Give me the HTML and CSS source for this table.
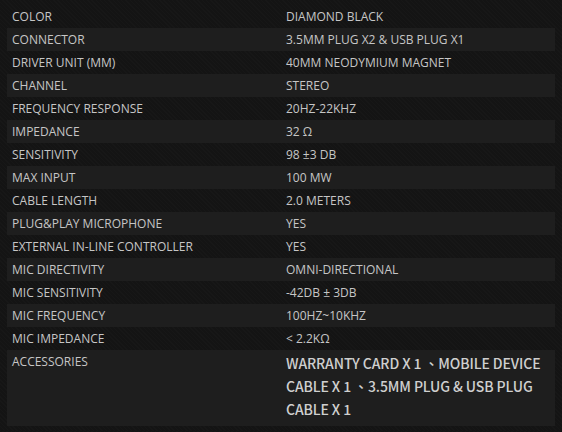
FILE: index.html
```html
<!DOCTYPE html>
<html lang="en">
<head>
  <meta charset="UTF-8" />
  <title>Specifications</title>
  <link rel="stylesheet" href="styles.css">
</head>
<body>
  <table class="spec">
    <tr><td>COLOR</td><td>DIAMOND BLACK</td></tr>
    <tr><td>CONNECTOR</td><td>3.5MM PLUG X2 &amp; USB PLUG X1</td></tr>
    <tr><td>DRIVER UNIT (MM)</td><td>40MM NEODYMIUM MAGNET</td></tr>
    <tr><td>CHANNEL</td><td>STEREO</td></tr>
    <tr><td>FREQUENCY RESPONSE</td><td>20HZ-22KHZ</td></tr>
    <tr><td>IMPEDANCE</td><td>32 Ω</td></tr>
    <tr><td>SENSITIVITY</td><td>98 ±3 DB</td></tr>
    <tr><td>MAX INPUT</td><td>100 MW</td></tr>
    <tr><td>CABLE LENGTH</td><td>2.0 METERS</td></tr>
    <tr><td>PLUG&amp;PLAY MICROPHONE</td><td>YES</td></tr>
    <tr><td>EXTERNAL IN-LINE CONTROLLER</td><td>YES</td></tr>
    <tr><td>MIC DIRECTIVITY</td><td>OMNI-DIRECTIONAL</td></tr>
    <tr><td>MIC SENSITIVITY</td><td>-42DB ± 3DB</td></tr>
    <tr><td>MIC FREQUENCY</td><td>100HZ~10KHZ</td></tr>
    <tr><td>MIC IMPEDANCE</td><td>&lt; 2.2KΩ</td></tr>
    <tr class="tall">
      <td>ACCESSORIES</td>
      <td><span class="acc">WARRANTY CARD X 1 、MOBILE DEVICE CABLE X 1 、3.5MM PLUG &amp; USB PLUG CABLE X 1</span></td>
    </tr>
  </table>
</body>
</html>
```

FILE: styles.css
```css
body {
  margin: 0;
  padding: 5px 7px;
  background-color: #141414;
  background-image: repeating-linear-gradient(45deg, rgba(255,255,255,0.012) 0 1px, transparent 1px 3px);
  font-family: 'Open Sans', sans-serif;
  color: #c6c6c6;
}
.spec {
  width: 548px;
  border-collapse: collapse;
  table-layout: fixed;
}
.spec td {
  width: 50%;
  height: 23px;
  padding: 0 5px;
  font-size: 12px;
  line-height: 23px;
  vertical-align: middle;
  white-space: nowrap;
}
.spec tr:nth-child(even) td {
  background: #1e1e1e;
}
.spec tr.tall td {
  height: 74px;
  vertical-align: top;
}
.spec tr.tall td:last-child {
  white-space: normal;
  padding-top: 2px;
}
.acc {
  display: block;
  font-family: 'Noto Sans CJK TC', 'Noto Sans', sans-serif;
  font-size: 14px;
  font-weight: 500;
  letter-spacing: -0.1px;
  line-height: 23px;
  color: #cfcfcf;
  width: 262px;
}
```
